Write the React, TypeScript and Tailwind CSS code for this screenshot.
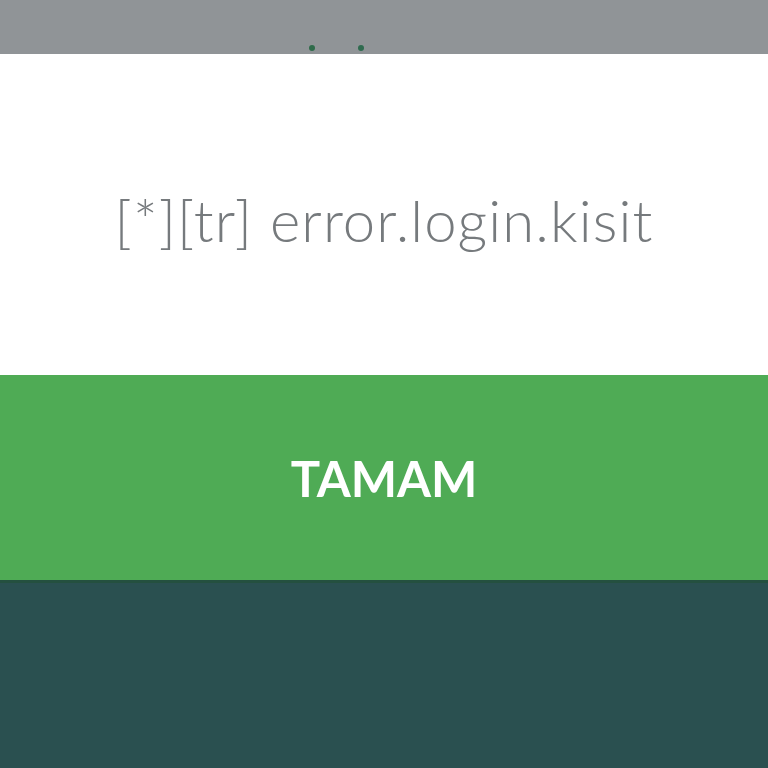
import React from 'react';

const App: React.FC = () => {
  return (
    <div className="flex h-[768px] w-[768px] flex-col overflow-hidden font-['Lato',sans-serif]">
      {/* overlay top band with dots */}
      <div className="flex h-[54px] items-end justify-center bg-[#909497] pb-[3px]">
        <div className="flex gap-[43px] pr-[96px]">
          <span className="h-[6px] w-[6px] rounded-full bg-[#2f6b4a]" />
          <span className="h-[6px] w-[6px] rounded-full bg-[#2f6b4f]" />
        </div>
      </div>

      {/* message */}
      <div className="flex h-[321px] items-start justify-center bg-white pt-[137px]">
        <p className="text-[58px] font-light leading-none tracking-[1.1px] text-[#767a7d]">
          [*][tr] error.login.kisit
        </p>
      </div>

      {/* button */}
      <button className="flex h-[205px] items-center justify-center bg-[#4fab55] pt-[3px]">
        <span className="text-[49px] font-bold tracking-[0px] text-white">TAMAM</span>
      </button>

      <div className="h-[3px] bg-[#24503f]" />
      <div className="flex-1 bg-[#2a5050]" />
    </div>
  );
};

export default App;
